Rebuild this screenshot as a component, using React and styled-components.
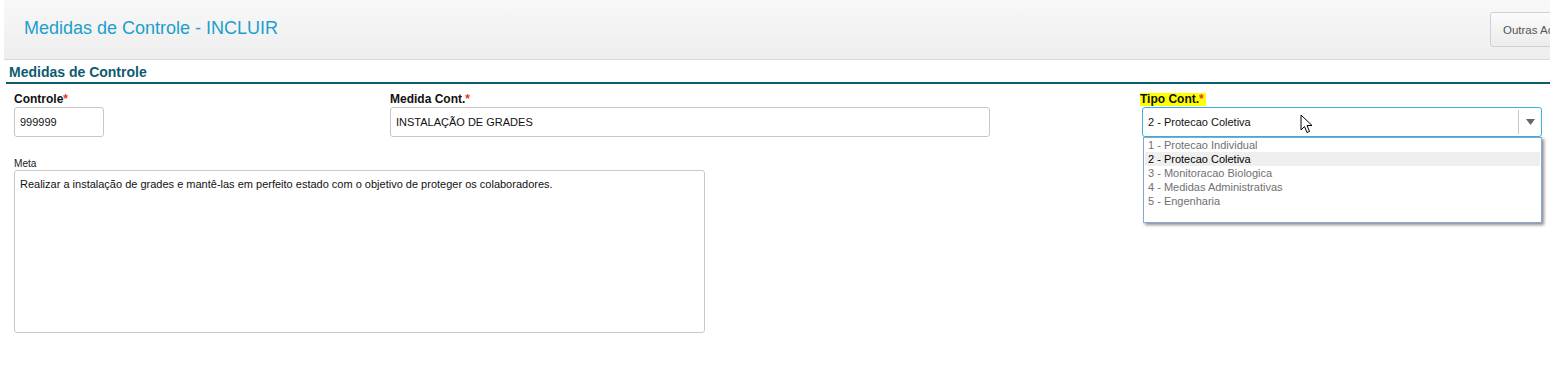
import React from "react";
import styled, { createGlobalStyle } from "styled-components";

const GlobalStyle = createGlobalStyle`
  html, body { margin: 0; padding: 0; background: #ffffff; overflow: hidden; }
  body { font-family: Arial, "Liberation Sans", sans-serif; color: #000; }
  * { box-sizing: border-box; }
`;

const Page = styled.div`
  width: 1550px;
  height: 380px;
  position: relative;
  overflow: hidden;
`;

const Header = styled.header`
  margin-left: 4px;
  height: 60px;
  display: flex;
  align-items: center;
  justify-content: space-between;
  padding-left: 20px;
  background: linear-gradient(#f8f8f8, #eeeeee);
  border-bottom: 1px solid #d8d8d8;
  overflow: hidden;
`;

const Title = styled.h1`
  margin: 0;
  font-size: 18px;
  font-weight: normal;
  color: #1c9fcd;
  padding-bottom: 2px;
`;

const ActionButton = styled.button`
  flex-shrink: 0;
  width: 96px;
  height: 35px;
  margin-right: -36px;
  padding: 0 0 0 12px;
  text-align: left;
  font-family: Arial, "Liberation Sans", sans-serif;
  font-size: 11.5px;
  color: #555;
  white-space: nowrap;
  background: linear-gradient(#fbfbfb, #ececec);
  border: 1px solid #d0d0d0;
  border-radius: 3px;
`;

const SectionTitle = styled.h2`
  margin: 0 0 0 6px;
  padding: 4px 0 2px 3px;
  font-size: 14px;
  font-weight: bold;
  color: #0e5a70;
  border-bottom: 2px solid #0a5e70;
  line-height: 16px;
`;

const FieldRow = styled.div`
  display: grid;
  grid-template-columns: 376px 752px 400px;
  padding: 9px 0 0 14px;
`;

const Field = styled.div`
  display: flex;
  flex-direction: column;
  position: relative;
`;

const Label = styled.label`
  align-self: flex-start;
  font-size: 12px;
  font-weight: bold;
  line-height: 13px;
  height: 13px;
  margin-bottom: 1px;
  margin-left: ${(p) => (p.$shift ? `${p.$shift}px` : "0")};
  padding-right: ${(p) => (p.$highlight ? "2px" : "0")};
  background: ${(p) => (p.$highlight ? "#ffff00" : "transparent")};
  color: #111;
`;

const Req = styled.span`
  color: #e8341c;
`;

const TextInput = styled.div`
  width: ${(p) => p.$w}px;
  height: 30px;
  display: flex;
  align-items: center;
  padding-left: 5px;
  font-size: 11px;
  color: #111;
  border: 1px solid #c8c8c8;
  border-radius: 3px;
  background: #fff;
`;

const Select = styled.div`
  width: 400px;
  height: 30px;
  display: flex;
  align-items: center;
  border: 1px solid #3cb2d8;
  border-radius: 3px;
  background: #fff;
  font-size: 11px;
  color: #111;
`;

const SelectValue = styled.span`
  flex: 1;
  padding-left: 5px;
`;

const SelectArrow = styled.span`
  width: 23px;
  height: 24px;
  display: flex;
  align-items: center;
  justify-content: center;
  border-left: 1px solid #c9c9c9;
`;

const Dropdown = styled.ul`
  position: absolute;
  top: 44px;
  left: 1px;
  width: 399px;
  height: 86px;
  margin: 0;
  padding: 0 1px;
  list-style: none;
  background: #fff;
  border: 1px solid #86a8d4;
  box-shadow: 2px 2px 3px rgba(0, 0, 0, 0.45);
  z-index: 5;
`;

const Option = styled.li`
  height: 14px;
  line-height: 14px;
  padding-left: 3px;
  font-size: 11px;
  color: ${(p) => (p.$selected ? "#000" : "#707070")};
  background: ${(p) => (p.$selected ? "#efefef" : "transparent")};
`;

const Cursor = styled.svg`
  position: absolute;
  left: 158px;
  top: 21px;
  z-index: 6;
`;

const MetaBlock = styled.div`
  display: flex;
  flex-direction: column;
  padding: 20px 0 0 14px;
`;

const MetaLabel = styled.label`
  font-size: 11px;
  line-height: 12px;
  margin-bottom: 1px;
  color: #222;
  transform: scaleX(0.92);
  transform-origin: left;
`;

const TextArea = styled.div`
  width: 691px;
  height: 163px;
  padding: 7px 5px;
  font-size: 11px;
  color: #111;
  border: 1px solid #c8c8c8;
  border-radius: 3px;
  background: #fff;
`;

const options = [
  "1 - Protecao Individual",
  "2 - Protecao Coletiva",
  "3 - Monitoracao Biologica",
  "4 - Medidas Administrativas",
  "5 - Engenharia",
];

export default function App() {
  return (
    <Page>
      <GlobalStyle />
      <Header>
        <Title>Medidas de Controle - INCLUIR</Title>
        <ActionButton>Outras Ações</ActionButton>
      </Header>
      <SectionTitle>Medidas de Controle</SectionTitle>
      <FieldRow>
        <Field>
          <Label>
            Controle<Req>*</Req>
          </Label>
          <TextInput $w={90}>999999</TextInput>
        </Field>
        <Field>
          <Label>
            Medida Cont.<Req>*</Req>
          </Label>
          <TextInput $w={600}>INSTALAÇÃO DE GRADES</TextInput>
        </Field>
        <Field>
          <Label $highlight $shift={-2}>
            Tipo Cont.<Req>*</Req>
          </Label>
          <Select>
            <SelectValue>2 - Protecao Coletiva</SelectValue>
            <SelectArrow>
              <svg width="9" height="6" viewBox="0 0 9 6">
                <path d="M0 0 H9 L4.5 6 Z" fill="#666" />
              </svg>
            </SelectArrow>
          </Select>
          <Cursor width="13" height="20" viewBox="0 0 13 20">
            <path
              d="M1 1 L1 16 L4.5 12.5 L7 18.5 L9.5 17.5 L7 11.5 L12 11.5 Z"
              fill="#fff"
              stroke="#000"
              strokeWidth="1"
            />
          </Cursor>
          <Dropdown>
            {options.map((o, i) => (
              <Option key={o} $selected={i === 1}>
                {o}
              </Option>
            ))}
          </Dropdown>
        </Field>
      </FieldRow>
      <MetaBlock>
        <MetaLabel>Meta</MetaLabel>
        <TextArea>
          Realizar a instalação de grades e mantê-las em perfeito estado com o
          objetivo de proteger os colaboradores.
        </TextArea>
      </MetaBlock>
    </Page>
  );
}
